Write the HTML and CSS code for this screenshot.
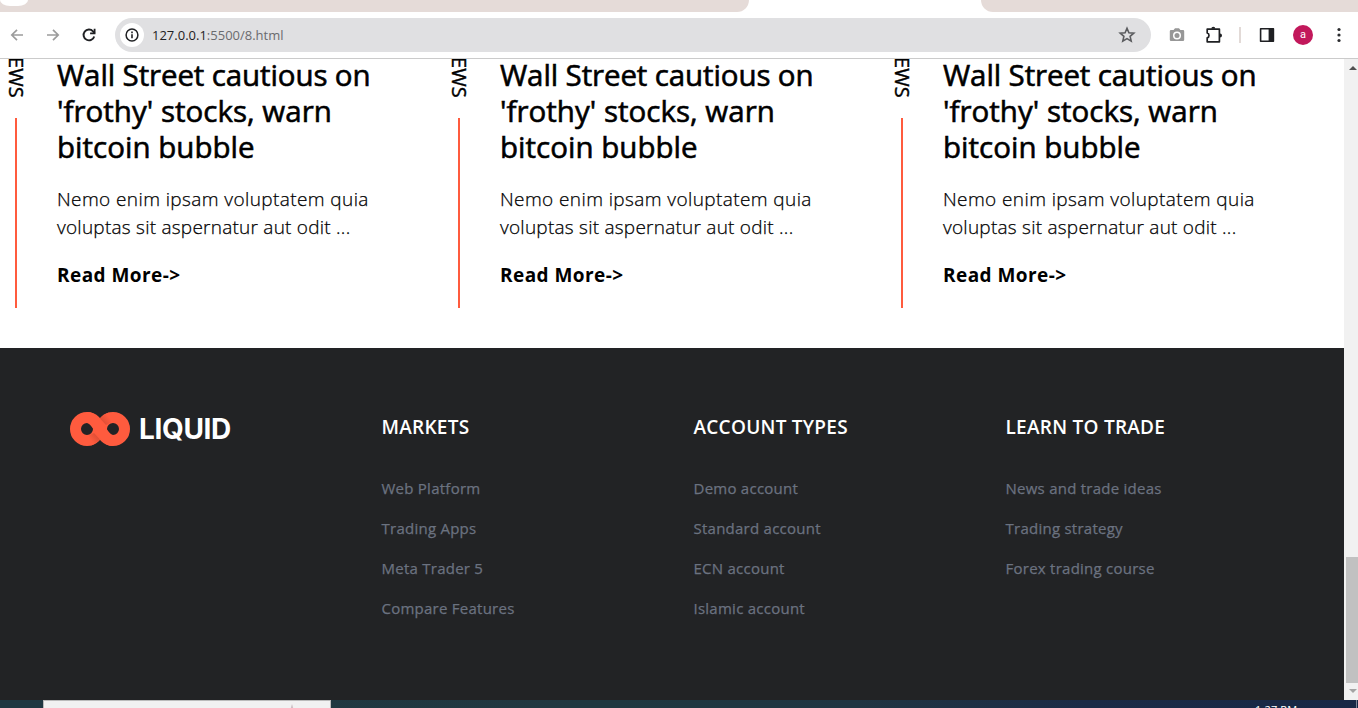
FILE: index.html
```html
<!DOCTYPE html>
<html lang="en">
<head>
<meta charset="utf-8">
<title>Liquid</title>
<link rel="stylesheet" href="styles.css">
</head>
<body>
<div class="tabs"><div class="tabs-left"><span class="tab-pill"></span></div><div class="tabs-active"></div><div class="tabs-right"></div></div>
<header class="toolbar">
  <svg class="ic nav-back" viewBox="0 0 16 16"><path d="M14 8H3M8 2.800 2.800 8 8 13.200" fill="none" stroke="#9c9c9c" stroke-width="1.700"/></svg>
  <svg class="ic nav-fwd" viewBox="0 0 16 16"><path d="M2 8h11M8 2.800 13.200 8 8 13.200" fill="none" stroke="#9c9c9c" stroke-width="1.700"/></svg>
  <svg class="ic nav-reload" viewBox="0 0 16 16"><path d="M13.200 9.400A5.400 5.400 0 1 1 12 4.300L13.600 6" fill="none" stroke="#1f2023" stroke-width="1.900"/><path d="M14.500 1.800v5.400H9.100V5.500h3.600V1.800z" fill="#1f2023"/></svg>
  <div class="omnibox">
    <span class="info"><svg class="ic-info" viewBox="0 0 14 14"><circle cx="7" cy="7" r="5.900" fill="none" stroke="#1f2023" stroke-width="1.500"/><path d="M6.200 6.200h1.600v4H6.200zM6.200 3.600h1.600v1.600H6.200z" fill="#1f2023"/></svg></span>
    <span class="url">127.0.0.1<span class="path">:5500/8.html</span></span>
    <svg class="star" viewBox="0 0 18 18"><path d="M9 2.300l1.900 4.500 4.900.4-3.700 3.200 1.100 4.700L9 12.600l-4.200 2.500 1.100-4.700L2.200 7.200l4.900-.4z" fill="none" stroke="#5a5b5e" stroke-width="1.600"/></svg>
  </div>
  <svg class="camera" viewBox="0 0 16 14"><path d="M2 2h2.600L6 .3h4L11.400 2H14a1.200 1.200 0 0 1 1.200 1.200v8.600A1.200 1.200 0 0 1 14 13H2a1.200 1.200 0 0 1-1.200-1.200V3.200A1.200 1.200 0 0 1 2 2z" fill="#979797"/><circle cx="8" cy="7.400" r="4" fill="#fff"/><circle cx="8" cy="7.400" r="2.500" fill="#979797"/></svg>
  <svg class="puzzle" viewBox="0 0 18 18"><path d="M2.200 3.200h12.200v12.600H2.200v-4c2.400-.6 2.400-4.200 0-4.800z" fill="none" stroke="#1f2023" stroke-width="1.700" stroke-linejoin="round"/><path d="M6.300 2.800a2 2 0 0 1 4 0zM15 7.500a2 2 0 0 1 0 4z" fill="#1f2023"/></svg>
  <span class="divider"></span>
  <svg class="panel" viewBox="0 0 16 16"><path d="M1.600 1.800h12.800v12.400H1.600z" fill="#fff" stroke="#1f2023" stroke-width="1.600" stroke-linejoin="round"/><path d="M9.600 1.500h5v13h-5z" fill="#1f2023"/></svg>
  <span class="avatar">a</span>
  <svg class="dots" viewBox="0 0 4 16"><circle cx="2" cy="2.500" r="1.600"/><circle cx="2" cy="8" r="1.600"/><circle cx="2" cy="13.500" r="1.600"/></svg>
</header>
<div class="viewport">
  <main class="page">
    <section class="news">
      <article class="card">
        <div class="rail"><span class="tag">NEWS</span><span class="bar"></span></div>
        <div class="body"><h2>Wall Street cautious on<br><span class="loose">'frothy' stocks, warn<br>bitcoin bubble</span></h2><p>Nemo enim ipsam voluptatem quia<br><span class="tight">voluptas sit aspernatur aut odit ...</span></p><a class="more">Read More-&gt;</a></div>
      </article>
      <article class="card">
        <div class="rail"><span class="tag">NEWS</span><span class="bar"></span></div>
        <div class="body"><h2>Wall Street cautious on<br><span class="loose">'frothy' stocks, warn<br>bitcoin bubble</span></h2><p>Nemo enim ipsam voluptatem quia<br><span class="tight">voluptas sit aspernatur aut odit ...</span></p><a class="more">Read More-&gt;</a></div>
      </article>
      <article class="card">
        <div class="rail"><span class="tag">NEWS</span><span class="bar"></span></div>
        <div class="body"><h2>Wall Street cautious on<br><span class="loose">'frothy' stocks, warn<br>bitcoin bubble</span></h2><p>Nemo enim ipsam voluptatem quia<br><span class="tight">voluptas sit aspernatur aut odit ...</span></p><a class="more">Read More-&gt;</a></div>
      </article>
    </section>
    <footer class="footer">
      <div class="logo">
        <svg class="mark" viewBox="0 0 60 34"><defs><linearGradient id="fold" gradientUnits="userSpaceOnUse" x1="31" y1="10" x2="38" y2="4"><stop offset="0" stop-color="#d94c34"/><stop offset="1" stop-color="#ff5b3e"/></linearGradient><linearGradient id="fold2" gradientUnits="userSpaceOnUse" x1="29" y1="24" x2="22" y2="30"><stop offset="0" stop-color="#d94c34"/><stop offset="1" stop-color="#ff5b3e"/></linearGradient></defs><g fill="none" stroke="#ff5b3e" stroke-width="11"><circle cx="17" cy="17" r="11.500"/><circle cx="43" cy="17" r="11.500"/></g><path d="M30 6.500Q34 2 39 0.600L41 10.500 36 13z" fill="url(#fold)"/><path d="M30 27.500Q26 32 21 33.400L19 23.500 24 21z" fill="url(#fold2)"/><path d="M17 5.500C28 5.500 32 28.500 43 28.500" fill="none" stroke="#ff5b3e" stroke-width="10.800"/></svg>
        <span class="brand">LIQUID</span>
      </div>
      <div class="col"><h3>MARKETS</h3><a>Web Platform</a><a>Trading Apps</a><a>Meta Trader 5</a><a>Compare Features</a></div>
      <div class="col"><h3>ACCOUNT TYPES</h3><a>Demo account</a><a>Standard account</a><a>ECN account</a><a>Islamic account</a></div>
      <div class="col"><h3>LEARN TO TRADE</h3><a>News and trade ideas</a><a>Trading strategy</a><a>Forex trading course</a></div>
    </footer>
  </main>
  <aside class="scroll"><svg class="arrow" viewBox="0 0 8 4"><path d="M0 4l4-4 4 4z" fill="#505050"/></svg><span class="thumb"></span><svg class="arrow" viewBox="0 0 8 4"><path d="M0 0h8L4 4z" fill="#a3a3a3"/></svg></aside>
</div>
<div class="taskbar"><div class="search"><svg class="spark" viewBox="0 0 6 5"><path d="M1.500 5 3 0l1.500 5z" fill="#cdbfc4"/></svg></div><span class="clock">1:27 PM</span><span class="peek"></span></div>
</body>
</html>
```
FILE: styles.css
```css
* { box-sizing: border-box; }
body { margin: 0; width: 1358px; height: 708px; overflow: hidden; display: flex; flex-direction: column; background: #fff; font-family: "Open Sans", "Noto Sans", sans-serif; }
svg { display: block; flex: none; }
.tabs { height: 12px; display: flex; flex: none; background: #fff; }
.tabs-left { width: 749px; background: #e5dbd8; border-bottom-right-radius: 12px; }
.tab-pill { display: block; width: 28px; height: 6px; background: #fff; border-radius: 0 0 10px 10px / 0 0 6px 6px; }
.tabs-active { width: 232px; }
.tabs-right { flex: 1; background: #e5dbd8; border-bottom-left-radius: 12px; }
.toolbar { height: 47px; flex: none; display: flex; align-items: center; border-bottom: 1px solid #cbcbcb; padding: 0 17px 0 9px; }
.ic { width: 16px; height: 16px; }
.nav-fwd { margin-left: 20px; }
.nav-reload { margin-left: 20px; }
.omnibox { margin-left: 18px; width: 1036px; height: 34px; border-radius: 17px; background: #e0e0e2; display: flex; align-items: center; padding: 0 15px 0 5px; }
.info { width: 24px; height: 24px; border-radius: 50%; background: #fff; display: flex; align-items: center; justify-content: center; }
.ic-info { width: 14px; height: 14px; }
.url { margin-left: 8px; font-size: 13px; color: #1f2023; flex: 1; white-space: nowrap; }
.path { color: #6a6b6e; }
.star { width: 18px; height: 18px; }
.camera { margin-left: 18px; width: 16px; height: 14px; }
.puzzle { margin-left: 20px; width: 18px; height: 18px; }
.divider { margin-left: 16px; width: 2px; height: 16px; background: #e2dad7; }
.panel { margin-left: 18px; width: 16px; height: 16px; }
.avatar { margin-left: 18px; width: 20px; height: 20px; border-radius: 50%; background: #c2185b; color: #fff; font-family: Roboto, sans-serif; font-size: 11px; line-height: 19px; text-align: center; }
.dots { margin-left: 24px; width: 4px; height: 16px; fill: #2b2c2f; }
.viewport { height: 641px; flex: none; display: flex; overflow: hidden; }
.page { width: 1344px; height: 641px; display: flex; flex-direction: column; }
.news { height: 289px; display: flex; overflow: hidden; }
.card { width: 443px; height: 249px; flex: none; display: flex; align-items: flex-end; }
.rail { width: 32px; display: flex; flex-direction: column; align-items: center; }
.tag { writing-mode: vertical-rl; font-size: 20px; line-height: 32px; color: #000; margin-bottom: 20px; -webkit-text-stroke: 0.4px #000; }
.bar { width: 2px; height: 190px; background: #ff5b3e; }
.body { margin-left: 25px; height: 249px; white-space: nowrap; color: #000; }
h2 { margin: -2px 0 0; font-size: 29.5px; line-height: 36px; font-weight: 400; letter-spacing: -0.12px; -webkit-text-stroke: 0.6px #000; }
.loose { letter-spacing: 0.02px; }
p { margin: 20px 0 0; font-size: 19px; line-height: 28px; font-weight: 300; letter-spacing: 0.4px; -webkit-text-stroke: 0.25px #000; }
.tight { letter-spacing: 0.24px; }
.more { display: block; margin-top: 20px; font-size: 19px; line-height: 28px; font-weight: 700; letter-spacing: 0.45px; }
.footer { height: 352px; background: #222325; display: flex; padding-left: 70px; white-space: nowrap; }
.logo { width: 311.5px; padding-top: 64px; display: flex; align-items: flex-start; }
.mark { width: 60px; height: 34px; }
.brand { margin-left: 9px; font-family: Inter, sans-serif; font-weight: 700; font-size: 28px; line-height: 34px; letter-spacing: -0.35px; color: #fff; }
.col { width: 312px; padding-top: 64px; display: flex; flex-direction: column; align-items: flex-start; }
h3 { margin: 0 0 34px; font-size: 19px; line-height: 30px; font-weight: 600; letter-spacing: 0.26px; color: #fff; }
.col a { font-size: 15px; line-height: 24px; margin-bottom: 16px; letter-spacing: 0.25px; color: #6b7280; -webkit-text-stroke: 0.25px #6b7280; }
.scroll { width: 14px; background: #f1f1f1; display: flex; flex-direction: column; align-items: flex-end; padding-top: 7px; }
.arrow { width: 8px; height: 4px; margin-right: 1px; }
.thumb { width: 12px; height: 126px; margin: 487px 0 6px; background: #c1c1c1; }
.taskbar { height: 8px; flex: none; overflow: hidden; display: flex; padding-left: 43px; background: linear-gradient(90deg, #1f3741 0, #203840 45%, #203542 63%, #1b2b46 80%, #182745 100%); }
.search { width: 288px; background: #f1f1f1; border: 1px solid #bababa; border-bottom: 0; padding: 3px 0 0 245px; }
.spark { width: 6px; height: 5px; }
.clock { margin-left: 924px; width: 101px; font-size: 11px; line-height: 19px; letter-spacing: 0.15px; color: #fff; }
.peek { width: 1px; background: #7b8494; }
```
